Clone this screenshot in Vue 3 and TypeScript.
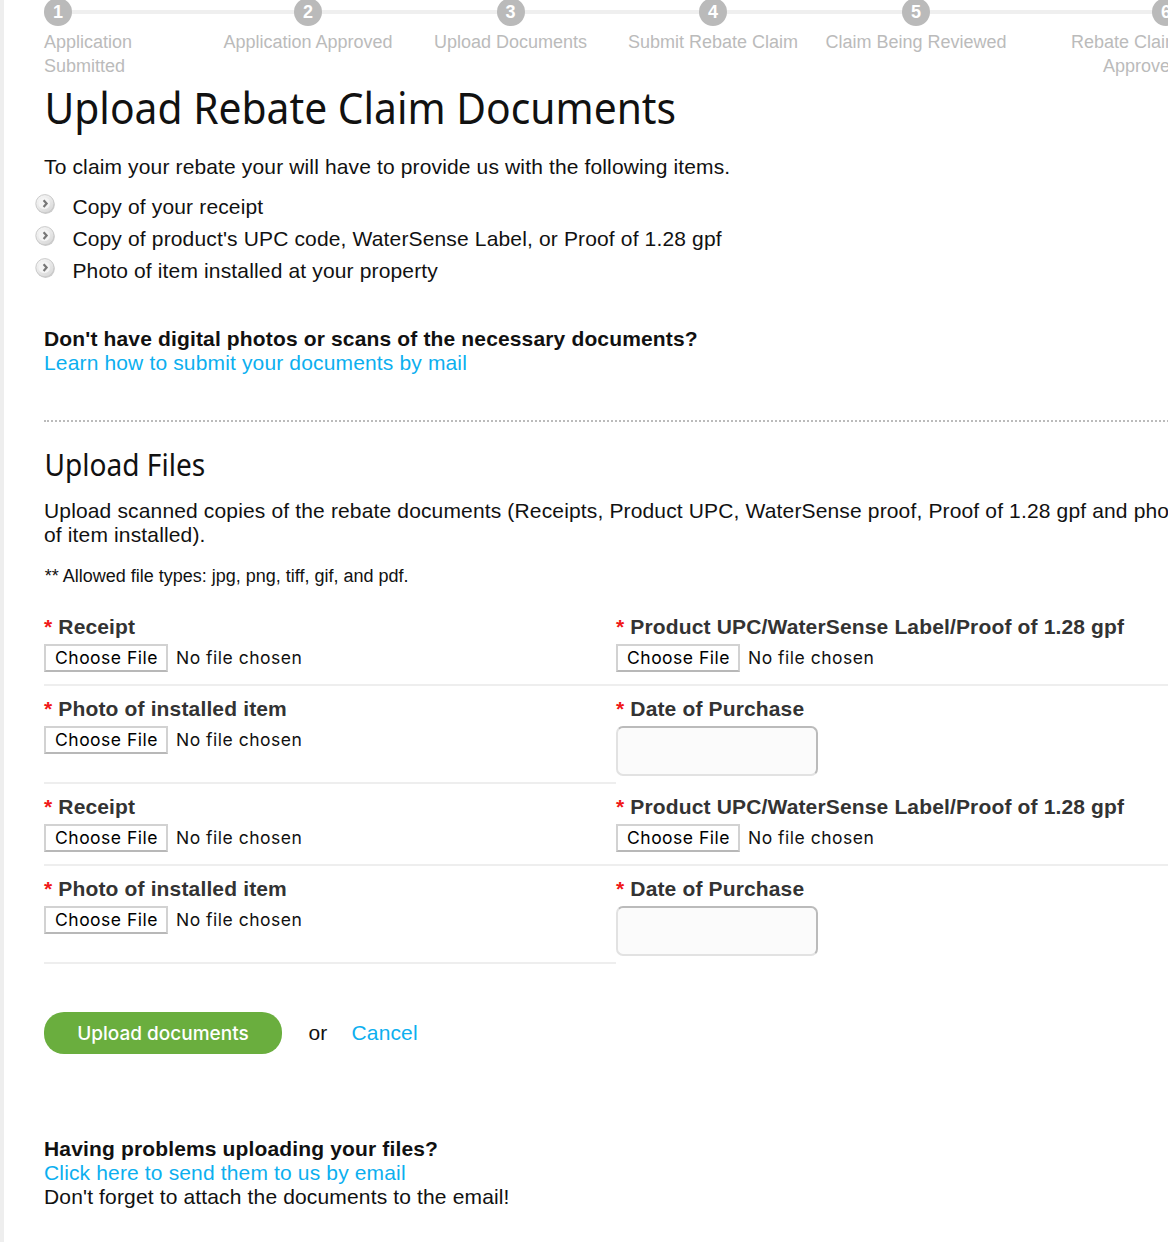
<script setup lang="ts">
interface Step { label: string; width: number; align: 'start' | 'center' | 'end' }
interface Field { label: string; kind: 'file' | 'date' }

const steps: Step[] = [
  { label: 'Application Submitted', width: 163, align: 'start' },
  { label: 'Application Approved', width: 202, align: 'center' },
  { label: 'Upload Documents', width: 203, align: 'center' },
  { label: 'Submit Rebate Claim', width: 202, align: 'center' },
  { label: 'Claim Being Reviewed', width: 204, align: 'center' },
  { label: 'Rebate Claim Approved', width: 162, align: 'end' },
]

const requirements = [
  'Copy of your receipt',
  "Copy of product's UPC code, WaterSense Label, or Proof of 1.28 gpf",
  'Photo of item installed at your property',
]

const files: Field[] = [
  { label: 'Receipt', kind: 'file' },
  { label: 'Product UPC/WaterSense Label/Proof of 1.28 gpf', kind: 'file' },
]
const details: Field[] = [
  { label: 'Photo of installed item', kind: 'file' },
  { label: 'Date of Purchase', kind: 'date' },
]
const rows: Field[][] = [files, details, files, details]
</script>

<template>
  <main class="page">
    <ol class="steps">
      <li v-for="(s, i) in steps" :key="s.label" class="step" :class="s.align" :style="{ width: s.width + 'px' }">
        <span class="dot">{{ i + 1 }}</span>
        <span class="step-label">{{ s.label }}</span>
      </li>
    </ol>

    <h1>Upload Rebate Claim Documents</h1>
    <p class="intro">To claim your rebate your will have to provide us with the following items.</p>
    <ul class="requirements">
      <li v-for="r in requirements" :key="r">
        <svg class="bullet" width="20" height="20" viewBox="0 0 20 20">
          <defs>
            <linearGradient id="bullet-fill" x1="0.2" y1="0" x2="0.8" y2="1">
              <stop offset="0" stop-color="#f6f6f6" />
              <stop offset="1" stop-color="#d8d8d8" />
            </linearGradient>
          </defs>
          <circle cx="10.6" cy="10.7" r="9.2" fill="#cccccc" />
          <circle cx="9.9" cy="9.7" r="9.1" fill="url(#bullet-fill)" stroke="#cacaca" stroke-width="1" />
          <circle cx="9.2" cy="9.4" r="5.8" fill="#f4f4f4" />
          <path d="M8.6 6.3 L11.6 9.6 L8.6 12.9" fill="none" stroke="#777" stroke-width="2.2" />
        </svg>
        <span>{{ r }}</span>
      </li>
    </ul>

    <section class="mail">
      <strong>Don't have digital photos or scans of the necessary documents?</strong>
      <a>Learn how to submit your documents by mail</a>
    </section>

    <section class="upload">
      <h2>Upload Files</h2>
      <p class="scan">Upload scanned copies of the rebate documents (Receipts, Product UPC, WaterSense proof, Proof of 1.28 gpf and photo<br>of item installed).</p>
      <p class="types">** Allowed file types: jpg, png, tiff, gif, and pdf.</p>

      <form class="fields" @submit.prevent>
        <div v-for="(row, i) in rows" :key="i" class="row">
          <div v-for="f in row" :key="f.label" class="field" :class="f.kind">
            <div class="label"><span class="req">*</span> {{ f.label }}</div>
            <div v-if="f.kind === 'file'" class="picker">
              <button type="button" class="choose">Choose File</button>
              <span>No file chosen</span>
            </div>
            <input v-else type="text" class="date-input">
          </div>
        </div>
      </form>

      <div class="actions">
        <button type="button" class="submit">Upload documents</button>
        <span class="or">or</span>
        <a>Cancel</a>
      </div>
    </section>

    <section class="help">
      <strong>Having problems uploading your files?</strong>
      <a>Click here to send them to us by email</a>
      <span>Don't forget to attach the documents to the email!</span>
    </section>
  </main>
</template>

<style>
body { margin: 0; overflow: hidden; background: #fff; }
</style>

<style scoped>
.page {
  box-sizing: border-box;
  width: 1188px;
  height: 1242px;
  overflow: hidden;
  padding-left: 40px;
  border-left: 4px solid #eee;
  font: 21px/24px "Liberation Sans", Arial, sans-serif;
  letter-spacing: 0.15px;
  color: #111;
  white-space: nowrap;
}
h1, h2, p, ul, ol { margin: 0; padding: 0; font-weight: 400; }
ul, ol { list-style: none; }
a { color: #0cafef; }

.steps {
  display: flex;
  height: 82px;
  margin-top: -2px;
  width: 1136px;
  background: linear-gradient(#efefef, #efefef) 0 12px / 100% 4px no-repeat;
  font-size: 18px;
  letter-spacing: 0;
  color: #bbb;
}
.step { flex: none; display: flex; flex-direction: column; align-items: center; text-align: center; }
.step.start { align-items: flex-start; text-align: left; }
.step.end { align-items: flex-end; text-align: right; }
.dot {
  width: 28px;
  height: 28px;
  border-radius: 50%;
  background: #bababa;
  color: #fff;
  font-weight: 700;
  line-height: 28px;
  text-align: center;
}
.step-label { margin-top: 4px; white-space: nowrap; }
.start .step-label, .end .step-label { width: 120px; white-space: normal; }

h1, h2 { font-family: "Noto Sans", "Open Sans", sans-serif; letter-spacing: 0; transform-origin: 0 0; }
h1 { height: 75px; padding-left: 0.5px; box-sizing: border-box; font-size: 44px; line-height: 55px; transform: scaleX(0.927); }
.intro { height: 40px; letter-spacing: 0.14px; }
.requirements li { display: flex; height: 32px; margin-left: -9px; }
.requirements span { margin-left: 17.4px; }
.bullet { flex: none; margin-top: -1px; }

.mail, .help { display: flex; flex-direction: column; }
.mail { margin-top: 36px; height: 93px; }

.upload {
  border: 0 dotted #bbb;
  border-top-width: 2px;
}
h2 { height: 77px; padding: 22px 0 0 0.5px; box-sizing: border-box; font-size: 30px; line-height: 42px; transform: scaleX(0.936); }
.types { height: 37px; margin: 17px 0 3px 0.7px; font-size: 18px; letter-spacing: 0; line-height: 24px; }

.row { display: flex; align-items: stretch; }
.field { flex: none; box-sizing: border-box; width: 572px; padding: 11px 0 12px; border-bottom: 2px solid #eee; }
.field.date { padding-bottom: 6px; border-bottom-color: transparent; }
.label { font-weight: 700; color: #333; margin-bottom: 5px; }
.req { color: #f01818; }
.picker { display: flex; align-items: center; gap: 8px; height: 28px; font: 17.5px/24px Inter, sans-serif; letter-spacing: 0.5px; }
.choose {
  box-sizing: border-box;
  width: 124px;
  height: 28px;
  padding: 0 0 0 1px;
  border: 2px solid #d2d2d2;
  border-bottom-color: #b8b8b8;
  background: #fff;
  color: #000;
  font: inherit;
  letter-spacing: inherit;
}
.date-input {
  display: block;
  box-sizing: border-box;
  width: 202px;
  height: 50px;
  border: 2px solid;
  border-color: #bbb #bbb #e2e2e2 #e2e2e2;
  border-radius: 7px;
  background: #fbfbfb;
}

.actions { display: flex; align-items: center; height: 42px; margin-top: 48px; }
.submit {
  width: 238px;
  height: 42px;
  padding: 2px 0 0;
  border: 0;
  border-radius: 20px;
  background: #6aae3e;
  color: #fff;
  font: 500 19px/24px Inter, sans-serif;
}
.or { margin: 0 24px 0 26.5px; }
.help { margin-top: 83px; }
</style>
